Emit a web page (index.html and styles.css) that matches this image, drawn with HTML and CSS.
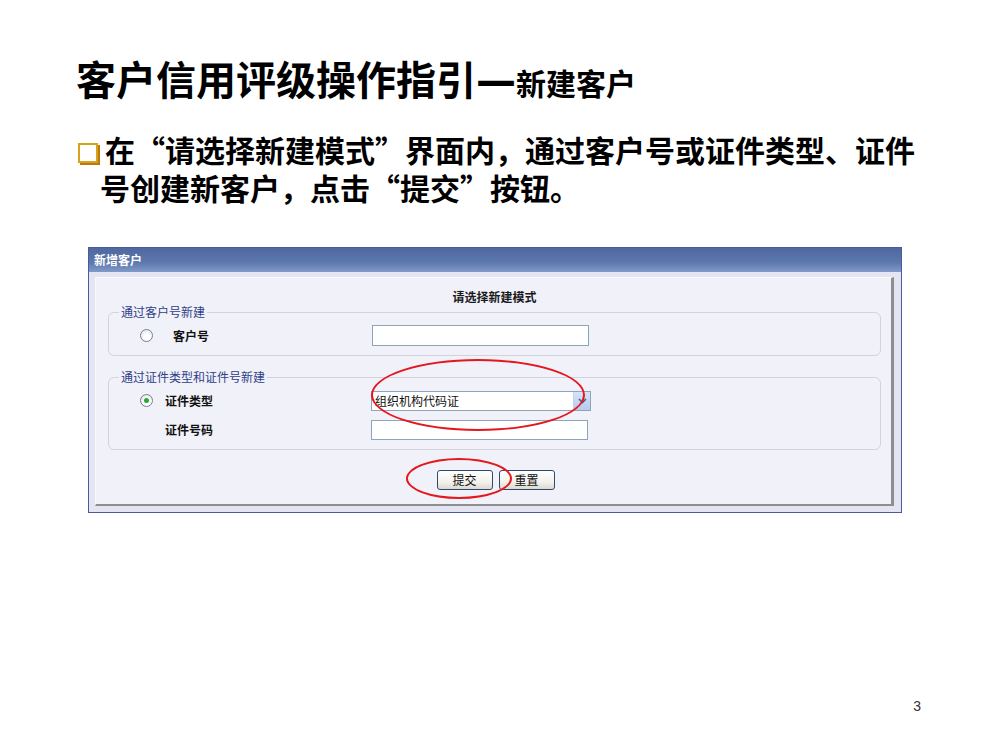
FILE: index.html
```html
<!DOCTYPE html>
<html lang="zh-CN">
<head>
  <meta charset="UTF-8">
  <title>客户信用评级操作指引</title>
  <link rel="stylesheet" href="styles.css">
</head>
<body>
  <div class="slide">
    <h1>客户信用评级操作指引<span class="dash">—</span><span class="sub">新建客户</span></h1>

    <p class="point"><span class="bullet"></span>在“请选择新建模式”界面内，通过客户号或证件类型、证件<br>号创建新客户，点击“提交”按钮。</p>

    <!-- 截图：新增客户窗口 -->
    <div class="window">
      <div class="titlebar">新增客户</div>
      <div class="panel">
        <div class="heading">请选择新建模式</div>

        <fieldset>
          <legend>通过客户号新建</legend>
          <div class="row">
            <span class="radio"></span>
            <span class="lbl lbl-wide">客户号</span>
            <span class="field"></span>
          </div>
        </fieldset>

        <fieldset>
          <legend>通过证件类型和证件号新建</legend>
          <div class="row">
            <span class="radio checked"></span>
            <span class="lbl">证件类型</span>
            <span class="select">
              <span class="select-text">组织机构代码证</span>
              <span class="select-btn">
                <svg width="9" height="6" viewBox="0 0 9 6"><path d="M1 1 L4.5 4.5 L8 1" fill="none" stroke="#4d6185" stroke-width="1.6"/></svg>
              </span>
            </span>
          </div>
          <div class="row">
            <span class="radio-space"></span>
            <span class="lbl">证件号码</span>
            <span class="field field-2"></span>
          </div>
        </fieldset>

        <div class="buttons">
          <button>提交</button>
          <button>重置</button>
        </div>
      </div>

      <div class="mark mark-select"></div>
      <div class="mark mark-submit"></div>
    </div>

    <div class="page-no">3</div>
  </div>
</body>
</html>
```

FILE: styles.css
```css
body {
  margin: 0;
  background: #fff;
  font-family: "Noto Sans CJK SC", "Liberation Sans", sans-serif;
  color: #000;
}
.slide {
  width: 990px;
  height: 742px;
  box-sizing: border-box;
  padding: 55px 69px 28px 76px;
  display: flex;
  flex-direction: column;
}
h1 {
  margin: 0;
  font-size: 40px;
  line-height: 46px;
  font-weight: 700;
  white-space: nowrap;
}
h1 .dash {
  font-family: "DejaVu Sans", sans-serif;
  font-size: 40px;
  letter-spacing: 0;
}
h1 .sub {
  font-size: 30px;
}
.point {
  margin: 25px 0 0;
  padding-left: 24px;
  text-indent: -24px;
  font-size: 30px;
  line-height: 38px;
  font-weight: 700;
  white-space: nowrap;
}
.bullet {
  display: inline-block;
  text-indent: 0;
  width: 16px;
  height: 16px;
  border: 2px solid #d9a21b;
  box-shadow: 2px 2px 0 #b57d0e;
  background: #fff;
  margin: 0 7px 0 2px;
  vertical-align: -1px;
}

/* window */
.window {
  position: relative;
  margin: 41px 0 0 12px;
  width: 814px;
  box-sizing: border-box;
  border: 1px solid #4b5a9b;
  background: #e3e6f2;
}
.titlebar {
  height: 24px;
  line-height: 24px;
  padding-left: 5px;
  color: #fff;
  font-size: 12px;
  font-weight: 700;
  background: linear-gradient(#4f689f, #5d78ae 60%, #819ac8);
}
.panel {
  margin: 5px 7px 6px 6px;
  padding: 10px 10px 14px 12px;
  background: #f1f1fa;
  border-top: 1px solid #f8f8fd;
  border-left: 1px solid #f8f8fd;
  border-right: 3px solid #8e8e8e;
  border-bottom: 2px solid #8e8e8e;
}
.heading {
  text-align: center;
  font-size: 12px;
  line-height: 17px;
  font-weight: 700;
  color: #1a1a1a;
}
fieldset {
  margin: 0;
  padding: 6px 0 9px;
  border: 1px solid #d3d3dc;
  border-radius: 6px;
}
fieldset + fieldset {
  margin-top: 14px;
}
legend {
  margin-left: 10px;
  padding: 0 2px;
  font-size: 12px;
  line-height: 14px;
  color: #2f3f86;
}
.row {
  display: flex;
  align-items: center;
  padding-left: 31px;
  height: 21px;
}
.row + .row {
  margin-top: 8px;
}
.radio, .radio-space {
  width: 13px;
  height: 13px;
  flex: none;
}
.radio {
  box-sizing: border-box;
  border-radius: 50%;
  border: 1px solid #6f8295;
  background: radial-gradient(circle at 60% 65%, #ffffff 30%, #dcdde2 100%);
  position: relative;
}
.radio.checked::after {
  content: "";
  position: absolute;
  left: 3px;
  top: 3px;
  width: 5px;
  height: 5px;
  border-radius: 50%;
  background: #2aa63a;
}
.lbl {
  width: 206px;
  margin-left: 12px;
  font-size: 12px;
  font-weight: 700;
  color: #111;
}
.lbl.lbl-wide {
  width: 199px;
  margin-left: 20px;
}
.field {
  width: 217px;
  height: 21px;
  box-sizing: border-box;
  border: 1px solid #8fa4b8;
  background: #fff;
}
.field.field-2 {
  height: 20px;
}
.select {
  display: flex;
  width: 220px;
  height: 20px;
  box-sizing: border-box;
  border: 1px solid #8fa4b8;
  background: #fff;
  font-size: 12px;
  line-height: 18px;
  color: #111;
}
.select-text {
  flex: 1;
  padding-left: 3px;
}
.select-btn {
  width: 16px;
  display: flex;
  align-items: center;
  justify-content: center;
  background: linear-gradient(#d6e3f8, #b6cbef);
  border-left: 1px solid #c3d3ec;
}
.buttons {
  display: flex;
  justify-content: center;
  gap: 6px;
  margin-top: 20px;
  padding-left: 2px;
}
button {
  width: 56px;
  height: 20px;
  padding: 0;
  font-family: inherit;
  font-size: 12px;
  line-height: 16px;
  color: #111;
  border: 1px solid #2f4a6e;
  border-radius: 3px;
  background: linear-gradient(#ffffff, #f3f2ec 60%, #dcdad0);
}
.mark {
  position: absolute;
  border: 2px solid #e5161c;
  border-radius: 50%;
  box-sizing: border-box;
}
.mark-select {
  left: 282px;
  top: 111px;
  width: 214px;
  height: 72px;
}
.mark-submit {
  left: 317px;
  top: 210px;
  width: 106px;
  height: 41px;
}
.page-no {
  margin-top: auto;
  align-self: flex-end;
  font-family: "Liberation Sans", sans-serif;
  font-size: 14px;
  line-height: 16px;
  color: #333;
}
```
